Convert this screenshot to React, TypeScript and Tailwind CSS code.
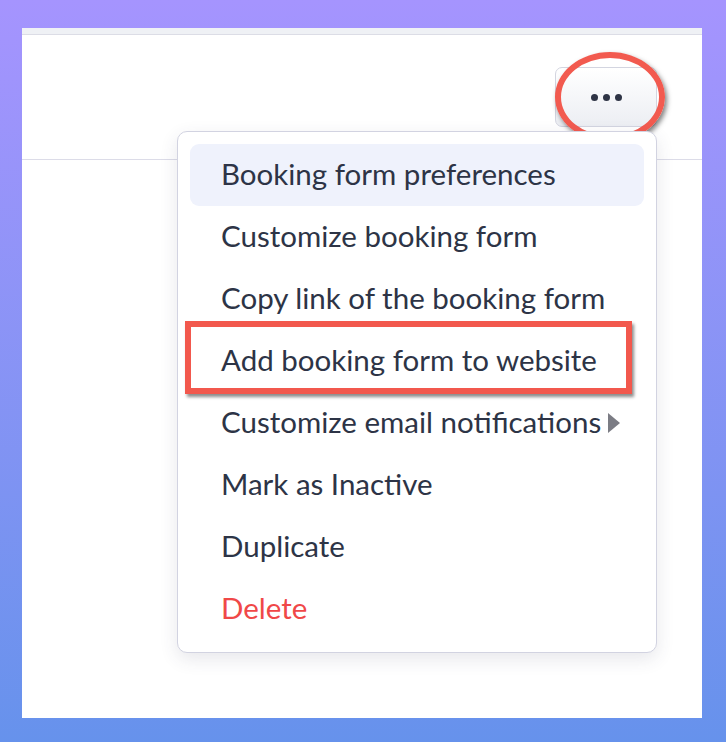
import React from 'react';

type MenuItem = {
  label: string;
  active?: boolean;
  danger?: boolean;
  submenu?: boolean;
};

const items: MenuItem[] = [
  { label: 'Booking form preferences', active: true },
  { label: 'Customize booking form' },
  { label: 'Copy link of the booking form' },
  { label: 'Add booking form to website' },
  { label: 'Customize email notifications', submenu: true },
  { label: 'Mark as Inactive' },
  { label: 'Duplicate' },
  { label: 'Delete', danger: true },
];

const MoreButton: React.FC = () => (
  <div className="relative">
    <button className="flex h-[60px] w-[102px] items-center justify-center gap-[5px] rounded-[7px] border-[1.5px] border-[#d3d5e0] bg-gradient-to-b from-white to-[#eceef3]">
      <span className="h-[7px] w-[7px] rounded-full bg-[#2e3445]" />
      <span className="h-[7px] w-[7px] rounded-full bg-[#2e3445]" />
      <span className="h-[7px] w-[7px] rounded-full bg-[#2e3445]" />
    </button>
    {/* annotation ring */}
    <div className="pointer-events-none absolute left-[0px] top-[-15px] h-[90px] w-[110px] rounded-[50%] border-[6px] border-[#f25a4f] shadow-[2px_3px_5px_rgba(0,0,0,0.5)]" />
  </div>
);

const Row: React.FC<{ item: MenuItem }> = ({ item }) => (
  <div
    className={`flex h-[62px] items-center rounded-[9px] pb-[3px] pl-[31px] text-[29.5px] leading-none ${
      item.active ? 'bg-[#eff2fc]' : ''
    } ${item.danger ? 'text-[#f04848]' : 'text-[#2d3446]'}`}
  >
    <span>{item.label}</span>
    {item.submenu && (
      <svg width="12" height="20" viewBox="0 0 12 20" className="ml-[7px] mt-[3px]">
        <path d="M0 0 L12 10 L0 20 Z" fill="#7b7c84" />
      </svg>
    )}
  </div>
);

export default function App() {
  return (
    <div
      className="min-h-[742px] w-[726px] bg-gradient-to-b from-[#a594fe] to-[#6692ec] px-[24px] pb-[24px] pt-[28px]"
      style={{ fontFamily: 'Lato, "Open Sans", sans-serif' }}
    >
      <div className="relative ml-[-2px] h-[690px] w-[680px] bg-white">
        <div className="h-[7px] border-b-[1.5px] border-[#dcdde6] bg-[#eff1f5]" />
        <div className="flex h-[125px] items-start justify-end border-b-[1.5px] border-[#dcdce8] pr-[45px] pt-[32px]">
          <MoreButton />
        </div>

        {/* dropdown menu */}
        <div className="absolute left-[155px] top-[103px] w-[480px] rounded-[10px] border-[1.5px] border-[#d2d3e1] bg-white px-[12px] py-[12px] shadow-[0_6px_18px_rgba(60,60,90,0.12)]">
          {items.map((item) => (
            <Row key={item.label} item={item} />
          ))}
          <div className="pointer-events-none absolute left-[7px] top-[189px] h-[73px] w-[447px] border-[6px] border-[#f2584d] shadow-[2px_3px_3px_rgba(0,0,0,0.45)]" />
        </div>
      </div>
    </div>
  );
}
